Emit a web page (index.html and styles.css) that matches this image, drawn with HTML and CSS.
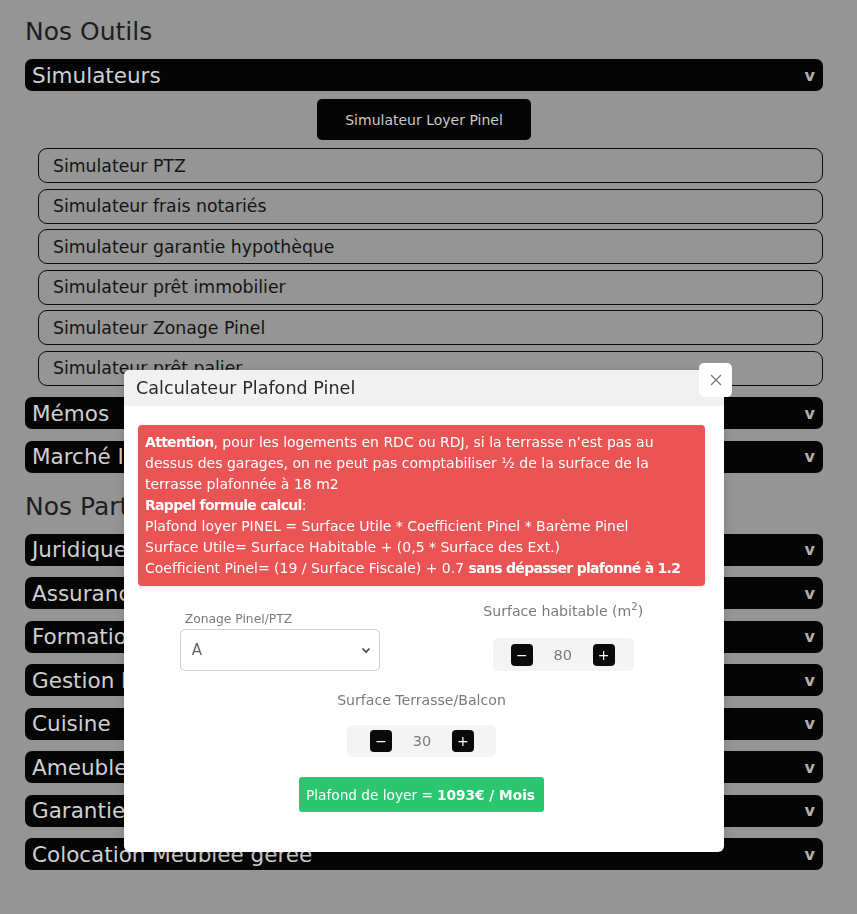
FILE: index.html
```html
<!DOCTYPE html>
<html lang="fr">
<head>
<meta charset="utf-8">
<title>Nos Outils</title>
<link rel="stylesheet" href="styles.css">
</head>
<body>
<main class="page">
  <h2 class="section-title first">Nos Outils</h2>
  <section class="acc open">
    <div class="bar"><span class="bar-label">Simulateurs</span><span class="chev">v</span></div>
    <div class="acc-body">
      <button class="btn-current">Simulateur Loyer Pinel</button>
      <ul class="sim-list">
        <li>Simulateur PTZ</li>
        <li>Simulateur frais notariés</li>
        <li>Simulateur garantie hypothèque</li>
        <li>Simulateur prêt immobilier</li>
        <li>Simulateur Zonage Pinel</li>
        <li>Simulateur prêt palier</li>
      </ul>
    </div>
  </section>
  <div class="bar"><span class="bar-label">Mémos</span><span class="chev">v</span></div>
  <div class="bar"><span class="bar-label">Marché Immobilier</span><span class="chev">v</span></div>

  <h2 class="section-title">Nos Partenaires</h2>
  <div class="bar"><span class="bar-label">Juridique</span><span class="chev">v</span></div>
  <div class="bar"><span class="bar-label">Assurance</span><span class="chev">v</span></div>
  <div class="bar"><span class="bar-label">Formation</span><span class="chev">v</span></div>
  <div class="bar"><span class="bar-label">Gestion Locative</span><span class="chev">v</span></div>
  <div class="bar"><span class="bar-label">Cuisine</span><span class="chev">v</span></div>
  <div class="bar"><span class="bar-label">Ameublement</span><span class="chev">v</span></div>
  <div class="bar"><span class="bar-label">Garantie Loyers Impayés</span><span class="chev">v</span></div>
  <div class="bar"><span class="bar-label">Colocation Meublée gérée</span><span class="chev">v</span></div>
</main>

<div class="modal" role="dialog">
  <div class="modal-head">Calculateur Plafond Pinel</div>
  <button class="modal-close" aria-label="Fermer">
    <svg width="12" height="12" viewBox="0 0 12 12"><path d="M1 1 L11 11 M11 1 L1 11" stroke="#7a7a7a" stroke-width="1.4" fill="none"/></svg>
  </button>
  <div class="modal-body">
    <div class="alert">
      <b>Attention</b>, pour les logements en RDC ou RDJ, si la terrasse n’est pas au dessus des garages, on ne peut pas comptabiliser ½ de la surface de la terrasse plafonnée à 18 m2<br>
      <b>Rappel formule calcul</b>:<br>
      Plafond loyer PINEL = Surface Utile * Coefficient Pinel * Barème Pinel<br>
      Surface Utile= Surface Habitable + (0,5 * Surface des Ext.)<br>
      Coefficient Pinel= (19 / Surface Fiscale) + 0.7 <b>sans dépasser plafonné à 1.2</b>
    </div>

    <div class="form-row">
      <div class="col col-left">
        <label class="small-label">Zonage Pinel/PTZ</label>
        <div class="select">
          <span>A</span>
          <svg width="10" height="7" viewBox="0 0 10 7"><path d="M1.5 1.5 L5 5 L8.5 1.5" stroke="#444" stroke-width="1.6" fill="none"/></svg>
        </div>
      </div>
      <div class="col col-right">
        <div class="field-label">Surface habitable (m<sup>2</sup>)</div>
        <div class="stepper stepper-a">
          <span class="step-btn">−</span>
          <span class="step-val">80</span>
          <span class="step-btn">+</span>
        </div>
      </div>
    </div>

    <div class="terrasse">
      <div class="field-label">Surface Terrasse/Balcon</div>
      <div class="stepper stepper-b">
        <span class="step-btn">−</span>
        <span class="step-val">30</span>
        <span class="step-btn">+</span>
      </div>
    </div>

    <div class="result">Plafond de loyer = <b>1093€ / Mois</b></div>
  </div>
</div>
</body>
</html>
```

FILE: styles.css
```css
* { box-sizing: border-box; }

html, body {
  margin: 0;
  padding: 0;
}

body {
  background: #959595;
  font-family: "DejaVu Sans", "Liberation Sans", sans-serif;
  color: #111;
  height: 914px;
  overflow: hidden;
}

.page {
  padding: 17px 34px 0 25px;
}

.section-title {
  margin: 19px 0 12px;
  font-size: 25px;
  font-weight: normal;
  line-height: 30px;
  color: #1e1e1e;
}

.section-title.first {
  margin-top: 0;
}

.bar {
  display: flex;
  align-items: center;
  justify-content: space-between;
  height: 32px;
  margin-bottom: 11.5px;
  padding: 0 8px 0 7px;
  background: #050505;
  border-radius: 7px;
}

.bar-label {
  font-size: 21.5px;
  color: #cfcfcf;
  white-space: nowrap;
}

.chev {
  font-size: 16px;
  font-weight: bold;
  color: #b0b0b0;
}

.acc {
  margin-bottom: 11.5px;
}

.acc .bar {
  margin-bottom: 0;
}

.acc-body {
  display: flex;
  flex-direction: column;
  align-items: center;
  padding-top: 8px;
}

.btn-current {
  width: 214px;
  height: 41px;
  border: none;
  border-radius: 5px;
  background: #050505;
  color: #c9c9c9;
  font-family: inherit;
  font-size: 14px;
}

.sim-list {
  list-style: none;
  margin: 8px 0 0;
  padding: 0 0 0 13px;
  align-self: stretch;
  display: flex;
  flex-direction: column;
  gap: 5.5px;
}

.sim-list li {
  height: 35px;
  display: flex;
  align-items: center;
  padding-left: 14px;
  border: 1px solid #0c0c0c;
  border-radius: 9px;
  font-size: 17.3px;
  color: #141414;
}

/* modal */
.modal {
  position: fixed;
  left: 124px;
  top: 370px;
  width: 600px;
  height: 482px;
  background: #fff;
  border-radius: 6px;
  box-shadow: 0 2px 10px rgba(0,0,0,0.15);
}

.modal-head {
  height: 36px;
  line-height: 36px;
  padding-left: 12px;
  background: #f1f1f1;
  border-radius: 6px 6px 0 0;
  font-size: 17.6px;
  color: #2a2a2a;
}

.modal-close {
  position: absolute;
  top: -7px;
  right: -8px;
  width: 33px;
  height: 34px;
  border: none;
  border-radius: 5px;
  background: #fff;
  display: flex;
  align-items: center;
  justify-content: center;
  padding: 0;
}

.modal-body {
  padding: 19px 19px 0 14px;
}

.alert {
  background: #eb5454;
  color: #fff;
  border-radius: 4px;
  padding: 7px 7px;
  font-size: 14px;
  line-height: 21px;
  box-shadow: 0 1px 3px rgba(0,0,0,0.12);
}

.alert b {
  font-weight: bold;
  letter-spacing: -0.7px;
}

.form-row {
  display: grid;
  grid-template-columns: 1fr 1fr;
  margin-top: 15px;
}

.col {
  display: flex;
  flex-direction: column;
  align-items: center;
}

.col-left {
  padding-top: 11px;
}

.small-label {
  width: 200px;
  padding-left: 5px;
  font-size: 12.3px;
  line-height: 15px;
  color: #7a7a7a;
}

.select {
  margin-top: 2px;
  width: 200px;
  height: 42px;
  border: 1px solid #cfcfcf;
  border-radius: 5px;
  display: flex;
  align-items: center;
  justify-content: space-between;
  padding: 0 8px 0 11px;
  font-size: 15px;
  color: #666;
}

.field-label {
  font-size: 14.1px;
  line-height: 20px;
  color: #7a7a7a;
  text-align: center;
}

.field-label sup {
  font-size: 10px;
  line-height: 0;
}

.stepper {
  display: flex;
  align-items: center;
  justify-content: space-between;
  background: #f4f4f4;
  border-radius: 5px;
  margin-top: 17px;
  height: 33px;
}

.stepper-a {
  width: 141px;
  padding: 0 19px 0 18px;
}

.stepper-b {
  width: 149px;
  padding: 0 22px 0 23px;
  margin: 15px auto 0;
  height: 32px;
}

.step-btn {
  width: 22px;
  height: 22px;
  border-radius: 4px;
  background: #0a0a0a;
  color: #fff;
  display: flex;
  align-items: center;
  justify-content: center;
  font-size: 14px;
  line-height: 1;
}

.step-val {
  font-size: 14.5px;
  color: #7a7a7a;
}

.terrasse {
  margin-top: 19px;
}

.result {
  width: 245px;
  height: 35px;
  margin: 20px auto 0;
  padding-left: 7px;
  display: flex;
  align-items: center;
  background: #2bc66f;
  color: #fff;
  border-radius: 3px;
  font-size: 13.7px;
  white-space: nowrap;
}

.result b {
  margin-left: 4px;
}
```
